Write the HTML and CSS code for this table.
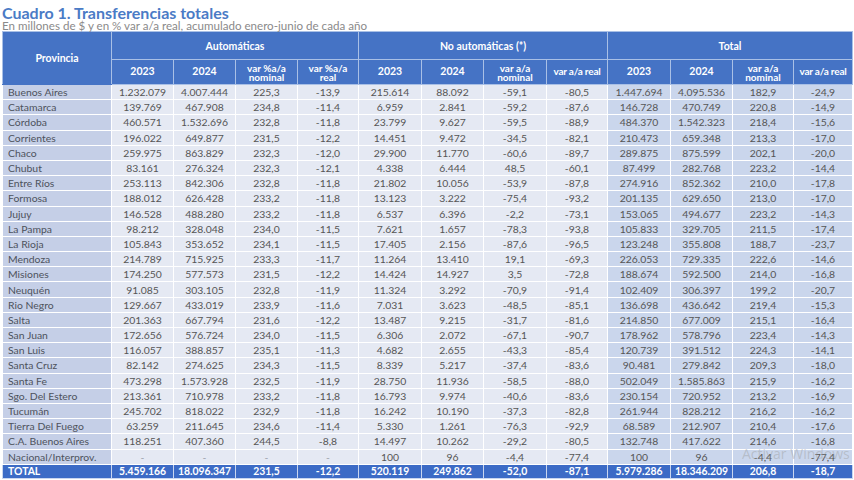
FILE: index.html
```html
<!DOCTYPE html>
<html lang="es">
<head>
<meta charset="utf-8">
<title>Cuadro 1. Transferencias totales</title>
<link rel="stylesheet" href="styles.css">
</head>
<body>
<div class="page">
  <h1 class="title">Cuadro 1. Transferencias totales</h1>
  <p class="subtitle">En millones de $ y en % var a/a real, acumulado enero-junio de cada año</p>
  <table class="grid">
    <colgroup>
      <col class="c-prov">
      <col class="c-62"><col class="c-62"><col class="c-62"><col class="c-61">
      <col class="c-63"><col class="c-62"><col class="c-63"><col class="c-61">
      <col class="c-63"><col class="c-62"><col class="c-61"><col class="c-59">
    </colgroup>
    <thead>
      <tr class="h1">
        <th rowspan="2" class="h-prov">Provincia</th>
        <th colspan="4">Automáticas</th>
        <th colspan="4">No automáticas (*)</th>
        <th colspan="4">Total</th>
      </tr>
      <tr class="h2">
        <th>2023</th><th>2024</th><th class="two">var %a/a<br>nominal</th><th class="two">var %a/a<br>real</th>
        <th>2023</th><th>2024</th><th class="two">var a/a<br>nominal</th><th class="one">var a/a real</th>
        <th>2023</th><th>2024</th><th class="two">var a/a<br>nominal</th><th class="one">var a/a real</th>
      </tr>
    </thead>
    <tbody>
      <tr><td>Buenos Aires</td><td>1.232.079</td><td>4.007.444</td><td>225,3</td><td>-13,9</td><td>215.614</td><td>88.092</td><td>-59,1</td><td>-80,5</td><td class="t">1.447.694</td><td class="t">4.095.536</td><td class="t">182,9</td><td class="t">-24,9</td></tr>
      <tr><td>Catamarca</td><td>139.769</td><td>467.908</td><td>234,8</td><td>-11,4</td><td>6.959</td><td>2.841</td><td>-59,2</td><td>-87,6</td><td class="t">146.728</td><td class="t">470.749</td><td class="t">220,8</td><td class="t">-14,9</td></tr>
      <tr><td>Córdoba</td><td>460.571</td><td>1.532.696</td><td>232,8</td><td>-11,8</td><td>23.799</td><td>9.627</td><td>-59,5</td><td>-88,9</td><td class="t">484.370</td><td class="t">1.542.323</td><td class="t">218,4</td><td class="t">-15,6</td></tr>
      <tr><td>Corrientes</td><td>196.022</td><td>649.877</td><td>231,5</td><td>-12,2</td><td>14.451</td><td>9.472</td><td>-34,5</td><td>-82,1</td><td class="t">210.473</td><td class="t">659.348</td><td class="t">213,3</td><td class="t">-17,0</td></tr>
      <tr><td>Chaco</td><td>259.975</td><td>863.829</td><td>232,3</td><td>-12,0</td><td>29.900</td><td>11.770</td><td>-60,6</td><td>-89,7</td><td class="t">289.875</td><td class="t">875.599</td><td class="t">202,1</td><td class="t">-20,0</td></tr>
      <tr><td>Chubut</td><td>83.161</td><td>276.324</td><td>232,3</td><td>-12,1</td><td>4.338</td><td>6.444</td><td>48,5</td><td>-60,1</td><td class="t">87.499</td><td class="t">282.768</td><td class="t">223,2</td><td class="t">-14,4</td></tr>
      <tr><td>Entre Ríos</td><td>253.113</td><td>842.306</td><td>232,8</td><td>-11,8</td><td>21.802</td><td>10.056</td><td>-53,9</td><td>-87,8</td><td class="t">274.916</td><td class="t">852.362</td><td class="t">210,0</td><td class="t">-17,8</td></tr>
      <tr><td>Formosa</td><td>188.012</td><td>626.428</td><td>233,2</td><td>-11,8</td><td>13.123</td><td>3.222</td><td>-75,4</td><td>-93,2</td><td class="t">201.135</td><td class="t">629.650</td><td class="t">213,0</td><td class="t">-17,0</td></tr>
      <tr><td>Jujuy</td><td>146.528</td><td>488.280</td><td>233,2</td><td>-11,8</td><td>6.537</td><td>6.396</td><td>-2,2</td><td>-73,1</td><td class="t">153.065</td><td class="t">494.677</td><td class="t">223,2</td><td class="t">-14,3</td></tr>
      <tr><td>La Pampa</td><td>98.212</td><td>328.048</td><td>234,0</td><td>-11,5</td><td>7.621</td><td>1.657</td><td>-78,3</td><td>-93,8</td><td class="t">105.833</td><td class="t">329.705</td><td class="t">211,5</td><td class="t">-17,4</td></tr>
      <tr><td>La Rioja</td><td>105.843</td><td>353.652</td><td>234,1</td><td>-11,5</td><td>17.405</td><td>2.156</td><td>-87,6</td><td>-96,5</td><td class="t">123.248</td><td class="t">355.808</td><td class="t">188,7</td><td class="t">-23,7</td></tr>
      <tr><td>Mendoza</td><td>214.789</td><td>715.925</td><td>233,3</td><td>-11,7</td><td>11.264</td><td>13.410</td><td>19,1</td><td>-69,3</td><td class="t">226.053</td><td class="t">729.335</td><td class="t">222,6</td><td class="t">-14,6</td></tr>
      <tr><td>Misiones</td><td>174.250</td><td>577.573</td><td>231,5</td><td>-12,2</td><td>14.424</td><td>14.927</td><td>3,5</td><td>-72,8</td><td class="t">188.674</td><td class="t">592.500</td><td class="t">214,0</td><td class="t">-16,8</td></tr>
      <tr><td>Neuquén</td><td>91.085</td><td>303.105</td><td>232,8</td><td>-11,9</td><td>11.324</td><td>3.292</td><td>-70,9</td><td>-91,4</td><td class="t">102.409</td><td class="t">306.397</td><td class="t">199,2</td><td class="t">-20,7</td></tr>
      <tr><td>Rio Negro</td><td>129.667</td><td>433.019</td><td>233,9</td><td>-11,6</td><td>7.031</td><td>3.623</td><td>-48,5</td><td>-85,1</td><td class="t">136.698</td><td class="t">436.642</td><td class="t">219,4</td><td class="t">-15,3</td></tr>
      <tr><td>Salta</td><td>201.363</td><td>667.794</td><td>231,6</td><td>-12,2</td><td>13.487</td><td>9.215</td><td>-31,7</td><td>-81,6</td><td class="t">214.850</td><td class="t">677.009</td><td class="t">215,1</td><td class="t">-16,4</td></tr>
      <tr><td>San Juan</td><td>172.656</td><td>576.724</td><td>234,0</td><td>-11,5</td><td>6.306</td><td>2.072</td><td>-67,1</td><td>-90,7</td><td class="t">178.962</td><td class="t">578.796</td><td class="t">223,4</td><td class="t">-14,3</td></tr>
      <tr><td>San Luis</td><td>116.057</td><td>388.857</td><td>235,1</td><td>-11,3</td><td>4.682</td><td>2.655</td><td>-43,3</td><td>-85,4</td><td class="t">120.739</td><td class="t">391.512</td><td class="t">224,3</td><td class="t">-14,1</td></tr>
      <tr><td>Santa Cruz</td><td>82.142</td><td>274.625</td><td>234,3</td><td>-11,5</td><td>8.339</td><td>5.217</td><td>-37,4</td><td>-83,6</td><td class="t">90.481</td><td class="t">279.842</td><td class="t">209,3</td><td class="t">-18,0</td></tr>
      <tr><td>Santa Fe</td><td>473.298</td><td>1.573.928</td><td>232,5</td><td>-11,9</td><td>28.750</td><td>11.936</td><td>-58,5</td><td>-88,0</td><td class="t">502.049</td><td class="t">1.585.863</td><td class="t">215,9</td><td class="t">-16,2</td></tr>
      <tr><td>Sgo. Del Estero</td><td>213.361</td><td>710.978</td><td>233,2</td><td>-11,8</td><td>16.793</td><td>9.974</td><td>-40,6</td><td>-83,6</td><td class="t">230.154</td><td class="t">720.952</td><td class="t">213,2</td><td class="t">-16,9</td></tr>
      <tr><td>Tucumán</td><td>245.702</td><td>818.022</td><td>232,9</td><td>-11,8</td><td>16.242</td><td>10.190</td><td>-37,3</td><td>-82,8</td><td class="t">261.944</td><td class="t">828.212</td><td class="t">216,2</td><td class="t">-16,2</td></tr>
      <tr><td>Tierra Del Fuego</td><td>63.259</td><td>211.645</td><td>234,6</td><td>-11,4</td><td>5.330</td><td>1.261</td><td>-76,3</td><td>-92,9</td><td class="t">68.589</td><td class="t">212.907</td><td class="t">210,4</td><td class="t">-17,6</td></tr>
      <tr><td>C.A. Buenos Aires</td><td>118.251</td><td>407.360</td><td>244,5</td><td>-8,8</td><td>14.497</td><td>10.262</td><td>-29,2</td><td>-80,5</td><td class="t">132.748</td><td class="t">417.622</td><td class="t">214,6</td><td class="t">-16,8</td></tr>
      <tr><td>Nacional/Interprov.</td><td class="dash">-</td><td class="dash">-</td><td class="dash">-</td><td class="dash">-</td><td>100</td><td>96</td><td>-4,4</td><td>-77,4</td><td class="t">100</td><td class="t">96</td><td class="t">-4,4</td><td class="t">-77,4</td></tr>
    </tbody>
    <tfoot>
      <tr><td>TOTAL</td><td>5.459.166</td><td>18.096.347</td><td>231,5</td><td>-12,2</td><td>520.119</td><td>249.862</td><td>-52,0</td><td>-87,1</td><td>5.979.286</td><td>18.346.209</td><td>206,8</td><td>-18,7</td></tr>
    </tfoot>
  </table>
  <div class="watermark">Activar Windows</div>
</div>
</body>
</html>
```

FILE: styles.css
```css
html, body {
  margin: 0;
  padding: 0;
  background: #ffffff;
}

.page {
  position: relative;
  width: 854px;
  height: 480px;
  overflow: hidden;
  font-family: Lato, "Open Sans", sans-serif;
}

.title {
  margin: 5px 0 0 2px;
  font-size: 16px;
  line-height: 16px;
  font-weight: 700;
  color: #4a7bc6;
}

.subtitle {
  margin: 0 0 0 2px;
  font-size: 11.6px;
  line-height: 10px;
  color: #8a8a8a;
  white-space: nowrap;
}

.grid {
  margin-left: 2px;
  border-collapse: collapse;
  table-layout: fixed;
  width: 850px;
}

.c-prov { width: 109px; }
.c-59 { width: 59px; }
.c-61 { width: 61px; }
.c-62 { width: 62px; }
.c-63 { width: 63px; }

.grid th {
  background: #4573c5;
  color: #ffffff;
  font-weight: 700;
  font-size: 10.5px;
  padding: 0;
  border: 1px solid #a9c0e6;
  text-align: center;
}

.grid .h1 th {
  height: 27px;
}

.grid .h1 th.h-prov {
  border-bottom-color: #4573c5;
}

.grid .h2 th {
  height: 22px;
  font-size: 10.5px;
  line-height: 9.5px;
}

.grid .h2 th.two {
  font-size: 10px;
  line-height: 9px;
  padding-top: 2px;
}

.grid .h2 th.one {
  font-size: 10px;
  letter-spacing: -0.2px;
}

.grid td {
  height: 14.2px;
  padding: 0;
  border: 1px solid #ffffff;
  background: #e5e9f3;
  color: #555555;
  font-size: 10.4px;
  line-height: 12px;
  text-align: center;
  white-space: nowrap;
}

.grid tbody td:first-child {
  background: #c5cfe7;
  text-align: left;
  padding-left: 5px;
  color: #4d525c;
}

.grid tbody td.t {
  background: #cad6ec;
}

.grid tbody td.dash {
  color: #9aa0aa;
}

.grid tfoot td {
  background: #3c6bc6;
  color: #ffffff;
  font-weight: 700;
  height: 13px;
  border-color: #c9d6ef;
}

.grid tfoot td:first-child {
  text-align: left;
  padding-left: 5px;
}

.watermark {
  position: absolute;
  left: 742px;
  top: 446px;
  font-family: "Open Sans", sans-serif;
  font-size: 14px;
  line-height: 16px;
  color: rgba(150, 150, 150, 0.4);
  pointer-events: none;
  white-space: nowrap;
}
```
